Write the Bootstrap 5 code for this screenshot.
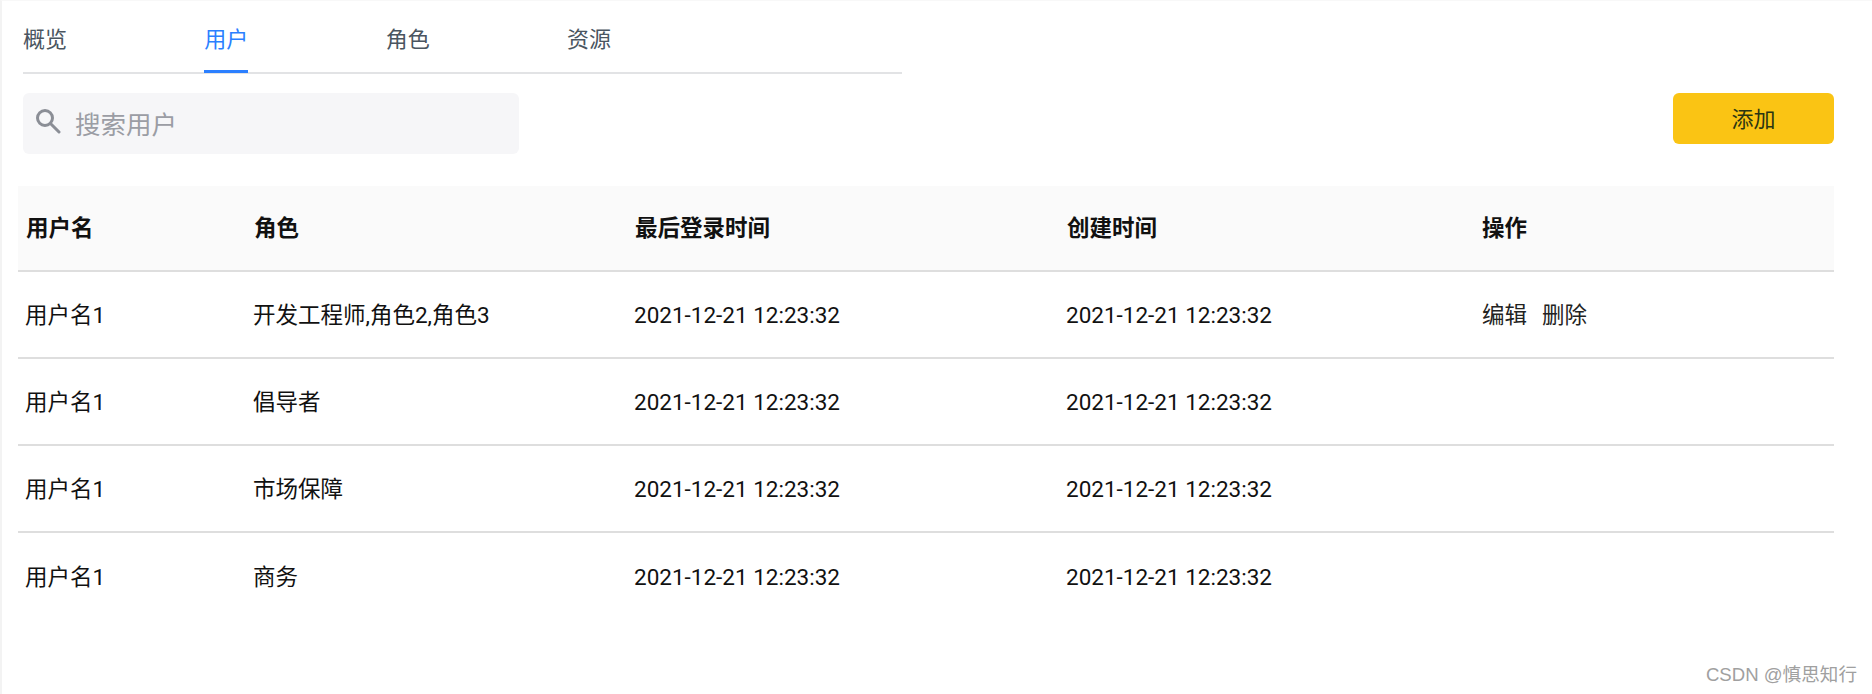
<!DOCTYPE html>
<html lang="zh-CN">
<head>
    <meta charset="UTF-8">
    <meta name="viewport" content="width=device-width, initial-scale=1">
    <title>用户</title>
    <link href="https://cdn.jsdelivr.net/npm/bootstrap@5.3.3/dist/css/bootstrap.min.css" rel="stylesheet">
    <style>
        html, body {
            height: 100%;
        }
        body {
            font-family: Roboto, "Noto Sans CJK SC", sans-serif;
            font-size: 22px;
            color: #111;
            background: #fff;
            border-left: 2px solid #f3f3f3;
            border-top: 1px solid #f8f8f8;
            padding: 0 38px 0 16px;
            position: relative;
            overflow: hidden;
        }
        .tab-strip {
            width: 879px;
            margin-left: 5px;
            border-bottom: 2px solid #e2e3e5;
            gap: 137.3px;
            height: 73px;
        }
        .tab-strip .nav-link {
            padding: 21px 0 0;
            height: 72px;
            line-height: 36px;
            color: #4a5560;
            border-bottom: 3px solid transparent;
        }
        .tab-strip .nav-link.active {
            color: #2b7fff;
            border-bottom-color: #2b7fff;
        }
        .tool-row {
            margin: 19px 0 32px 5px;
        }
        .search-box {
            width: 496px;
            height: 61px;
            background: #f6f6f8;
            border-radius: 6px;
            padding-left: 12px;
            gap: 14px;
        }
        .search-box svg {
            margin-bottom: 6px;
        }
        .search-box input {
            border: 0;
            outline: 0;
            background: transparent;
            font-size: 25.5px;
            width: 400px;
            padding: 3px 0 0;
            color: #333;
        }
        .search-box input::placeholder {
            color: #9b9da4;
            opacity: 1;
        }
        .btn-add {
            width: 161px;
            height: 51px;
            background: #fac414;
            border: 0;
            border-radius: 6px;
            font-size: 22px;
            color: #2a3512;
            padding: 2px 0 0;
        }
        .user-table {
            width: 1816px;
            table-layout: fixed;
            margin: 0;
            font-size: 22.5px;
        }
        .user-table th, .user-table td {
            padding: 3px 0 0 7px;
            vertical-align: middle;
            color: #111;
            border-bottom: 2px solid #dedede;
            box-shadow: none;
        }
        .user-table th {
            height: 85px;
            background: #fafafa;
            font-weight: 700;
            padding: 2px 0 0 8px;
        }
        .user-table td {
            height: 87px;
        }
        .user-table tr:last-child td {
            border-bottom: 0;
        }
        .user-table .op-col {
            padding-left: 0;
        }
        .op-link {
            color: #222;
            text-decoration: none;
            margin-right: 15px;
        }
        .watermark {
            position: absolute;
            right: 15px;
            bottom: 5px;
            font-family: "Liberation Sans", "Noto Sans CJK SC", sans-serif;
            font-size: 18.6px;
            color: #a0a0a0;
        }
    </style>
</head>
<body>
    <!-- Tabs -->
    <ul class="nav tab-strip">
        <li class="nav-item"><a class="nav-link" href="#">概览</a></li>
        <li class="nav-item"><a class="nav-link active" href="#">用户</a></li>
        <li class="nav-item"><a class="nav-link" href="#">角色</a></li>
        <li class="nav-item"><a class="nav-link" href="#">资源</a></li>
    </ul>

    <!-- Search and add -->
    <div class="tool-row d-flex justify-content-between align-items-start">
        <div class="search-box d-flex align-items-center">
            <svg width="26" height="26" viewBox="0 0 26 26" fill="none" stroke="#8b8e96" stroke-width="3">
                <circle cx="10" cy="10" r="7.5"/>
                <path d="M15.5 15.5L24 24" stroke-linecap="round"/>
            </svg>
            <input type="text" placeholder="搜索用户">
        </div>
        <button type="button" class="btn btn-add">添加</button>
    </div>

    <!-- Users -->
    <table class="table user-table">
        <colgroup>
            <col style="width: 228px">
            <col style="width: 381px">
            <col style="width: 432px">
            <col style="width: 423px">
            <col>
        </colgroup>
        <thead>
            <tr><th>用户名</th><th>角色</th><th>最后登录时间</th><th>创建时间</th><th class="op-col">操作</th></tr>
        </thead>
        <tbody>
            <tr>
                <td>用户名1</td><td>开发工程师,角色2,角色3</td><td>2021-12-21 12:23:32</td><td>2021-12-21 12:23:32</td>
                <td class="op-col"><a class="op-link" href="#">编辑</a><a class="op-link" href="#">删除</a></td>
            </tr>
            <tr><td>用户名1</td><td>倡导者</td><td>2021-12-21 12:23:32</td><td>2021-12-21 12:23:32</td><td></td></tr>
            <tr><td>用户名1</td><td>市场保障</td><td>2021-12-21 12:23:32</td><td>2021-12-21 12:23:32</td><td></td></tr>
            <tr><td>用户名1</td><td>商务</td><td>2021-12-21 12:23:32</td><td>2021-12-21 12:23:32</td><td></td></tr>
        </tbody>
    </table>

    <div class="watermark">CSDN @慎思知行</div>

    <script src="https://cdn.jsdelivr.net/npm/bootstrap@5.3.3/dist/js/bootstrap.bundle.min.js"></script>
</body>
</html>
